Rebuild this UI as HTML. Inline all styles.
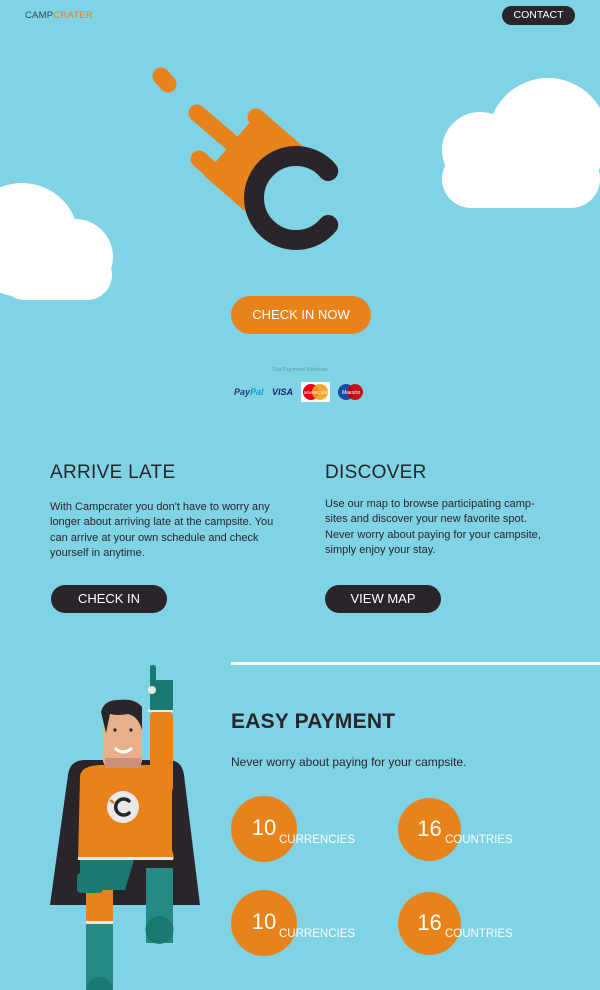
<!DOCTYPE html>
<html><head><meta charset="utf-8"><style>
*{margin:0;padding:0;box-sizing:border-box}
body{width:600px;height:990px;overflow:hidden;background:#7fd3e5;font-family:"Liberation Sans",sans-serif;position:relative;color:#2a252b}
.a{position:absolute}
.btn{position:absolute;border-radius:20px;color:#fff;text-align:center}
h2{position:absolute;font-weight:normal;font-size:19px;letter-spacing:0.3px}
p.t{position:absolute;font-size:11px;line-height:15.3px}
.c{position:absolute;border-radius:50%;background:#e8821a;color:#fff;font-size:22px;text-align:center}
.lab{position:absolute;color:#fff;font-size:11.5px}
</style></head><body>
<div class="a" style="left:25px;top:10px;font-size:9.5px;letter-spacing:0.2px"><span style="color:#2a4a5a">CAMP</span><span style="color:#e8821a">CRATER</span></div>
<div class="btn" style="left:502px;top:6px;width:73px;height:19px;background:#2a252b;font-size:10.5px;line-height:19px">CONTACT</div>

<svg class="a" style="left:0;top:0" width="600" height="340">
<g fill="#fff">
<circle cx="480" cy="150" r="38"/><circle cx="548" cy="138" r="60"/><rect x="442" y="150" width="158" height="58" rx="29"/>
<circle cx="22" cy="240" r="57"/><circle cx="75" cy="257" r="38"/><rect x="0" y="250" width="112" height="50" rx="25"/>
</g>
<g stroke="#e8821a" stroke-linecap="round" fill="none">
<line x1="161" y1="76" x2="168" y2="84" stroke-width="17"/>
<line x1="197" y1="113" x2="296" y2="198" stroke-width="17"/>
<line x1="256" y1="117" x2="300" y2="155" stroke-width="17"/>
<line x1="199" y1="159" x2="260" y2="212" stroke-width="17"/>
<line x1="232" y1="143" x2="300" y2="202" stroke-width="86" stroke-linecap="butt"/>
</g>
<circle cx="296" cy="198" r="33" fill="#7fd3e5"/>
<path d="M328.2,171 A42,42 0 1 0 328.2,225" stroke="#2a252b" stroke-width="20" fill="none" stroke-linecap="round"/>
</svg>

<div class="btn" style="left:231px;top:296px;width:140px;height:38px;background:#e8821a;font-size:13px;line-height:38px">CHECK IN NOW</div>
<div class="a" style="left:0;width:600px;top:367px;text-align:center;font-size:5.5px;color:#5a9aaa">Our Payment Methods</div>
<div class="a" style="left:234px;top:387px;font-size:9px;font-weight:bold;font-style:italic;color:#253b80">Pay<span style="color:#179bd7">Pal</span></div>
<div class="a" style="left:272px;top:387px;font-size:9px;font-weight:bold;font-style:italic;color:#1a1f71">VISA</div>
<svg class="a" style="left:301px;top:382px" width="68" height="20">
<rect x="0" y="0" width="29" height="20" fill="#fff"/><circle cx="10" cy="10" r="8" fill="#eb001b"/><circle cx="19" cy="10" r="8" fill="#f79e1b" opacity=".9"/>
<circle cx="45" cy="10" r="8" fill="#1a4aa8"/><circle cx="54" cy="10" r="8" fill="#cc0000" opacity=".9"/>
<text x="14.5" y="12" font-size="4.5" fill="#fff" text-anchor="middle" font-family="Liberation Sans" font-style="italic">MasterCard</text>
<text x="50" y="12" font-size="5" fill="#fff" text-anchor="middle" font-family="Liberation Sans" font-style="italic">Maestro</text>
</svg>

<h2 style="left:50px;top:462px">ARRIVE LATE</h2>
<p class="t" style="left:50px;top:500px;width:230px">With Campcrater you don't have to worry any longer about arriving late at the campsite. You can arrive at your own schedule and check yourself in anytime.</p>
<div class="btn" style="left:51px;top:585px;width:116px;height:28px;background:#2a252b;font-size:13px;line-height:28px">CHECK IN</div>
<h2 style="left:325px;top:462px">DISCOVER</h2>
<p class="t" style="left:325px;top:497px;width:222px">Use our map to browse participating camp-sites and discover your new favorite spot. Never worry about paying for your campsite, simply enjoy your stay.</p>
<div class="btn" style="left:325px;top:585px;width:116px;height:28px;background:#2a252b;font-size:13px;line-height:28px">VIEW MAP</div>

<div class="a" style="left:231px;top:662px;width:369px;height:3px;background:#fff"></div>
<div class="a" style="left:231px;top:710px;font-size:21px;font-weight:bold;letter-spacing:0.2px">EASY PAYMENT</div>
<div class="a" style="left:231px;top:755px;font-size:12px">Never worry about paying for your campsite.</div>

<div class="c" style="left:231px;top:796px;width:66px;height:66px;line-height:64px">10</div>
<div class="lab" style="left:279px;top:834px">CURRENCIES</div>
<div class="c" style="left:398px;top:798px;width:63px;height:63px;line-height:61px">16</div>
<div class="lab" style="left:445px;top:834px">COUNTRIES</div>
<div class="c" style="left:231px;top:890px;width:66px;height:66px;line-height:64px">10</div>
<div class="lab" style="left:279px;top:928px">CURRENCIES</div>
<div class="c" style="left:398px;top:892px;width:63px;height:63px;line-height:61px">16</div>
<div class="lab" style="left:445px;top:928px">COUNTRIES</div>

<svg class="a" style="left:0;top:660px" width="230" height="330">
<g transform="translate(0,-660)">
<path d="M50,905 L68,775 Q70,760 85,760 L168,760 Q182,760 184,775 L200,905 Z" fill="#2a252b"/>
<rect x="146" y="868" width="27" height="75" fill="#258a84"/>
<circle cx="159.5" cy="930" r="14" fill="#1a7a72"/>
<rect x="86" y="885" width="27" height="45" fill="#e8821a"/>
<rect x="86" y="922" width="27" height="68" fill="#258a84"/>
<rect x="86" y="921" width="27" height="3" fill="#e8e8e8"/>
<circle cx="99.5" cy="990" r="13" fill="#1a7a72"/>
<path d="M80,777 Q80,766 100,765 L160,765 L172,790 L172,850 Q175,858 173,860 L78,860 Z" fill="#e8821a"/>
<rect x="150" y="712" width="23" height="80" rx="4" fill="#e8821a"/>
<rect x="148" y="709" width="25" height="3" fill="#e8e8e8"/>
<path d="M150,710 L150,667 Q150,665 153,665 Q156,665 156,668 L156,680 L173,680 L173,710 Z" fill="#1a7a72"/>
<circle cx="152" cy="690" r="4" fill="#e8e8e8"/>
<rect x="103" y="703" width="39" height="65" rx="8" fill="#e8b08a"/>
<rect x="105" y="758" width="36" height="10" fill="#c9917a"/>
<path d="M101,712 Q104,700 118,700 Q135,698 142,707 L142,730 Q138,716 128,714 Q118,716 110,714 L106,733 Z" fill="#2a252b"/>
<circle cx="115" cy="730" r="1.6" fill="#2a252b"/><circle cx="131" cy="730" r="1.6" fill="#2a252b"/>
<path d="M115,748 Q123,756 132,748" stroke="#fff" stroke-width="3" fill="none"/>
<rect x="78" y="857" width="95" height="3" fill="#e8e8e8"/>
<path d="M80,860 L134,860 L125,890 L80,890 Z" fill="#1a7a72"/>
<rect x="77" y="873" width="26" height="20" rx="4" fill="#1a7a72"/>
<circle cx="123" cy="807" r="16" fill="#e8e8e8"/>
<path d="M129,801 A8,8 0 1 0 129,813" stroke="#2a252b" stroke-width="3.5" fill="none" stroke-linecap="round"/>
<line x1="110" y1="800" x2="114" y2="803" stroke="#e8821a" stroke-width="2.5"/>
</g>
</svg>
</body></html>
